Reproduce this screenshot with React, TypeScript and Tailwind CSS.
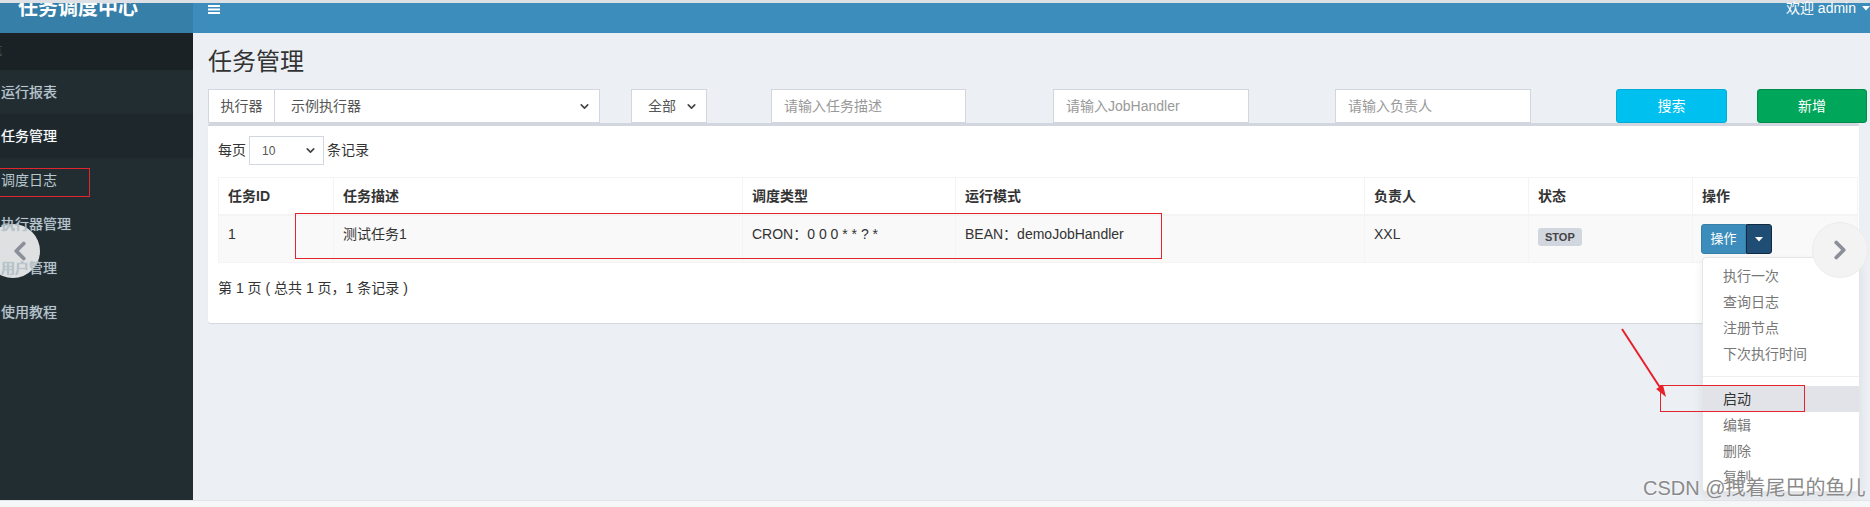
import { ChevronDown, ChevronLeft, ChevronRight } from "lucide-react";

const font = "font-['Liberation_Sans','Noto_Sans_CJK_SC',sans-serif]";

const sideItems = ["运行报表", "任务管理", "调度日志", "执行器管理", "用户管理", "使用教程"];

const columns = [
    { label: "任务ID", w: "w-[115px]" },
    { label: "任务描述", w: "w-[409px]" },
    { label: "调度类型", w: "w-[213px]" },
    { label: "运行模式", w: "w-[409px]" },
    { label: "负责人", w: "w-[164px]" },
    { label: "状态", w: "w-[164px]" },
    { label: "操作", w: "w-[165px]" },
];

function Sidebar() {
    return (
        <div className="relative w-[193px] shrink-0 bg-[#222d32] text-[14px] text-[#b8c7ce]">
            {/* slider arrow sits under the menu text */}
            <div className="absolute left-[-14px] top-[191px] w-[54px] h-[54px] rounded-full bg-[#dfe0e2] flex items-center justify-center">
                <ChevronLeft size={30} strokeWidth={3} className="ml-[14px] text-[#8b9098]" />
            </div>
            <div className="h-[37px] bg-[#1a2226] overflow-hidden">
                <span className="block ml-[-22px] leading-[37px] text-[12px] text-[#4b646f]">导航</span>
            </div>
            {sideItems.map((item) => (
                <div
                    key={item}
                    className={
                        "relative h-[44px] flex items-center pl-[1px] " +
                        (item === "任务管理" ? "bg-[#1e282c] text-white" : "")
                    }
                >
                    {item === "调度日志" ? (
                        <span className="relative">
                            {item}
                            <span className="absolute left-[-10px] top-[-2px] w-[99px] h-[29px] border border-[#e3262e]" />
                        </span>
                    ) : (
                        <span className="[text-shadow:0_0_1px_#8a98a0]">{item}</span>
                    )}
                </div>
            ))}
        </div>
    );
}

function FakeSelect({ text, className }: { text: string; className: string }) {
    return (
        <div className={"h-[34px] flex items-center justify-between bg-white border border-[#d2d6de] pl-[16px] pr-[8px] text-[14px] text-[#555] " + className}>
            <span>{text}</span>
            <ChevronDown size={13} strokeWidth={3} className="text-[#444]" />
        </div>
    );
}

function Placeholder({ text, className }: { text: string; className: string }) {
    return (
        <div className={"h-[34px] flex items-center bg-white border border-[#d2d6de] px-[12px] text-[14px] text-[#999] " + className}>
            {text}
        </div>
    );
}

function ActionMenu() {
    const top = ["执行一次", "查询日志", "注册节点", "下次执行时间"];
    const bottom = ["启动", "编辑", "删除", "复制"];
    return (
        <div className="absolute left-[1px] top-[33px] z-10 w-[158px] h-[235px] overflow-hidden bg-white border border-[#e6e6e6] rounded-[4px] shadow-[0_4px_10px_rgba(0,0,0,0.08)] py-[5px] text-[14px]">
            {top.map((t) => (
                <div key={t} className="px-[20px] leading-[26px] text-[#777]">{t}</div>
            ))}
            <div className="my-[9px] h-px bg-[#eeeeee]" />
            {bottom.map((t) => (
                <div
                    key={t}
                    className={"px-[20px] leading-[26px] " + (t === "启动" ? "bg-[#e1e3e9] text-[#333]" : "text-[#777]")}
                >
                    {t}
                </div>
            ))}
        </div>
    );
}

function JobTable() {
    return (
        <table className="table-fixed border-collapse w-[1639px] text-[14px] text-[#333]">
            <thead>
                <tr>
                    {columns.map((c) => (
                        <th
                            key={c.label}
                            className={c.w + " text-left font-bold px-[9px] py-[8px] leading-[20px] border border-[#f4f4f4] border-b-2"}
                        >
                            {c.label}
                        </th>
                    ))}
                </tr>
            </thead>
            <tbody>
                <tr className="bg-[#f9f9f9]">
                    <td className="align-top px-[9px] py-[8px] leading-[20px] border border-[#f4f4f4]">1</td>
                    <td className="align-top px-[9px] py-[8px] leading-[20px] border border-[#f4f4f4]">测试任务1</td>
                    <td className="align-top px-[9px] py-[8px] leading-[20px] border border-[#f4f4f4]">CRON：0 0 0 * * ? *</td>
                    <td className="align-top px-[9px] py-[8px] leading-[20px] border border-[#f4f4f4]">BEAN：demoJobHandler</td>
                    <td className="align-top px-[9px] py-[8px] leading-[20px] border border-[#f4f4f4]">XXL</td>
                    <td className="align-top px-[9px] py-[8px] leading-[20px] border border-[#f4f4f4]">
                        <span className="inline-block mt-[4px] px-[7px] leading-[18px] rounded-[3px] bg-[#d2d6de] text-[#444] text-[11px] font-bold">
                            STOP
                        </span>
                    </td>
                    <td className="align-top px-[8px] py-[8px] border border-[#f4f4f4]">
                        <div className="relative flex w-[71px]">
                            <div className="h-[30px] w-[45px] flex items-center justify-center bg-[#3c8dbc] border border-[#367fa9] rounded-l-[3px] text-white text-[13px]">
                                操作
                            </div>
                            <div className="h-[30px] w-[26px] flex items-center justify-center bg-[#204d74] border border-[#122b40] rounded-r-[3px]">
                                <svg width="8" height="5" viewBox="0 0 8 5"><path d="M0 0h8L4 4.5z" fill="#fff" /></svg>
                            </div>
                            <ActionMenu />
                        </div>
                    </td>
                </tr>
            </tbody>
        </table>
    );
}

export default function App() {
    return (
        <div className={"relative w-[1870px] h-[507px] overflow-hidden bg-[#f4f5f7] " + font}>
            <div className="h-[3px] bg-[#dde1e5]" />
            <div className="flex h-[30px]">
                <div className="w-[193px] shrink-0 bg-[#367fa9] overflow-hidden">
                    <div className="ml-[18px] mt-[-5px] leading-[20px] text-[20px] font-bold text-white">任务调度中心</div>
                </div>
                <div className="flex-1 flex justify-between bg-[#3c8dbc]">
                    <svg className="ml-[15px] mt-[2px]" width="12" height="9" viewBox="0 0 12 9">
                        <rect y="0" width="12" height="2" fill="#fff" />
                        <rect y="3.5" width="12" height="2" fill="#fff" />
                        <rect y="7" width="12" height="2" fill="#fff" />
                    </svg>
                    <div className="flex items-center gap-[6px] mt-[-5px] h-[20px] text-[14px] text-white">
                        <span>欢迎 admin</span>
                        <svg width="8" height="5" viewBox="0 0 8 5"><path d="M0 0h8L4 4.5z" fill="#fff" /></svg>
                    </div>
                </div>
            </div>

            <div className="flex h-[467px]">
                <Sidebar />
                <div className="flex-1 bg-[#ecf0f5] pl-[15px]">
                    <h1 className="mt-[12px] leading-[34px] text-[24px] text-[#333]">任务管理</h1>
                    <div className="mt-[10px] flex items-center">
                        <div className="flex">
                            <div className="h-[34px] w-[67px] flex items-center justify-center bg-white border border-[#d2d6de] text-[14px] text-[#555]">
                                执行器
                            </div>
                            <FakeSelect text="示例执行器" className="w-[325px] border-l-0" />
                        </div>
                        <FakeSelect text="全部" className="ml-[31px] w-[76px]" />
                        <Placeholder text="请输入任务描述" className="ml-[64px] w-[195px]" />
                        <Placeholder text="请输入JobHandler" className="ml-[87px] w-[196px]" />
                        <Placeholder text="请输入负责人" className="ml-[86px] w-[196px]" />
                        <div className="ml-[85px] h-[34px] w-[111px] flex items-center justify-center bg-[#00c0ef] border border-[#00acd6] rounded-[3px] text-[14px] text-white">
                            搜索
                        </div>
                        <div className="ml-[30px] h-[34px] w-[110px] shrink-0 flex items-center justify-center bg-[#00a65a] border border-[#008d4c] rounded-[3px] text-[14px] text-white">
                            新增
                        </div>
                    </div>

                    <div className="relative w-[1651px] bg-white border-t-[3px] border-[#d2d6de] rounded-[3px] shadow-[0_1px_1px_rgba(0,0,0,0.1)] pl-[10px] pt-[10px] pb-[25px]">
                        <div className="flex items-center gap-[3px] text-[14px] text-[#333]">
                            <span>每页</span>
                            <div className="h-[29px] w-[75px] flex items-center justify-between bg-white border border-[#d2d6de] pl-[12px] pr-[6px] text-[12px] text-[#555]">
                                <span>10</span>
                                <ChevronDown size={13} strokeWidth={3} className="text-[#444]" />
                            </div>
                            <span>条记录</span>
                        </div>
                        <div className="mt-[12px]">
                            <JobTable />
                        </div>
                        <div className="mt-[15px] leading-[20px] text-[14px] text-[#333]">
                            第 1 页 ( 总共 1 页，1 条记录 )
                        </div>
                        <div className="absolute left-[87px] top-[87px] w-[867px] h-[46px] border border-[#e3262e]" />
                    </div>
                </div>
            </div>
            <div className="h-[7px] border-t border-[#e3e5e8] bg-[#f6f7f8]" />

            {/* overlays */}
            <div className="absolute z-20 left-[1812px] top-[222px] w-[56px] h-[56px] rounded-full bg-[#f3f3f3] border border-[#ececec] flex items-center justify-center">
                <ChevronRight size={30} strokeWidth={3} className="text-[#8b9098]" />
            </div>
            <div className="absolute z-20 left-[1660px] top-[385px] w-[145px] h-[27px] border border-[#e3262e]" />
            <svg className="absolute z-20 left-[1610px] top-[320px]" width="70" height="90" viewBox="0 0 70 90">
                <line x1="12" y1="9" x2="51" y2="69" stroke="#e8202a" strokeWidth="2" />
                <polygon points="56,77 46.1,69.1 52.9,64.7" fill="#e8202a" />
            </svg>
            <div className="absolute z-20 left-[1643px] top-[475px] whitespace-nowrap text-[20px] leading-[26px] text-[#8a8a8a] [text-shadow:0_0_2px_#fff]">
                CSDN @拽着尾巴的鱼儿
            </div>
        </div>
    );
}
